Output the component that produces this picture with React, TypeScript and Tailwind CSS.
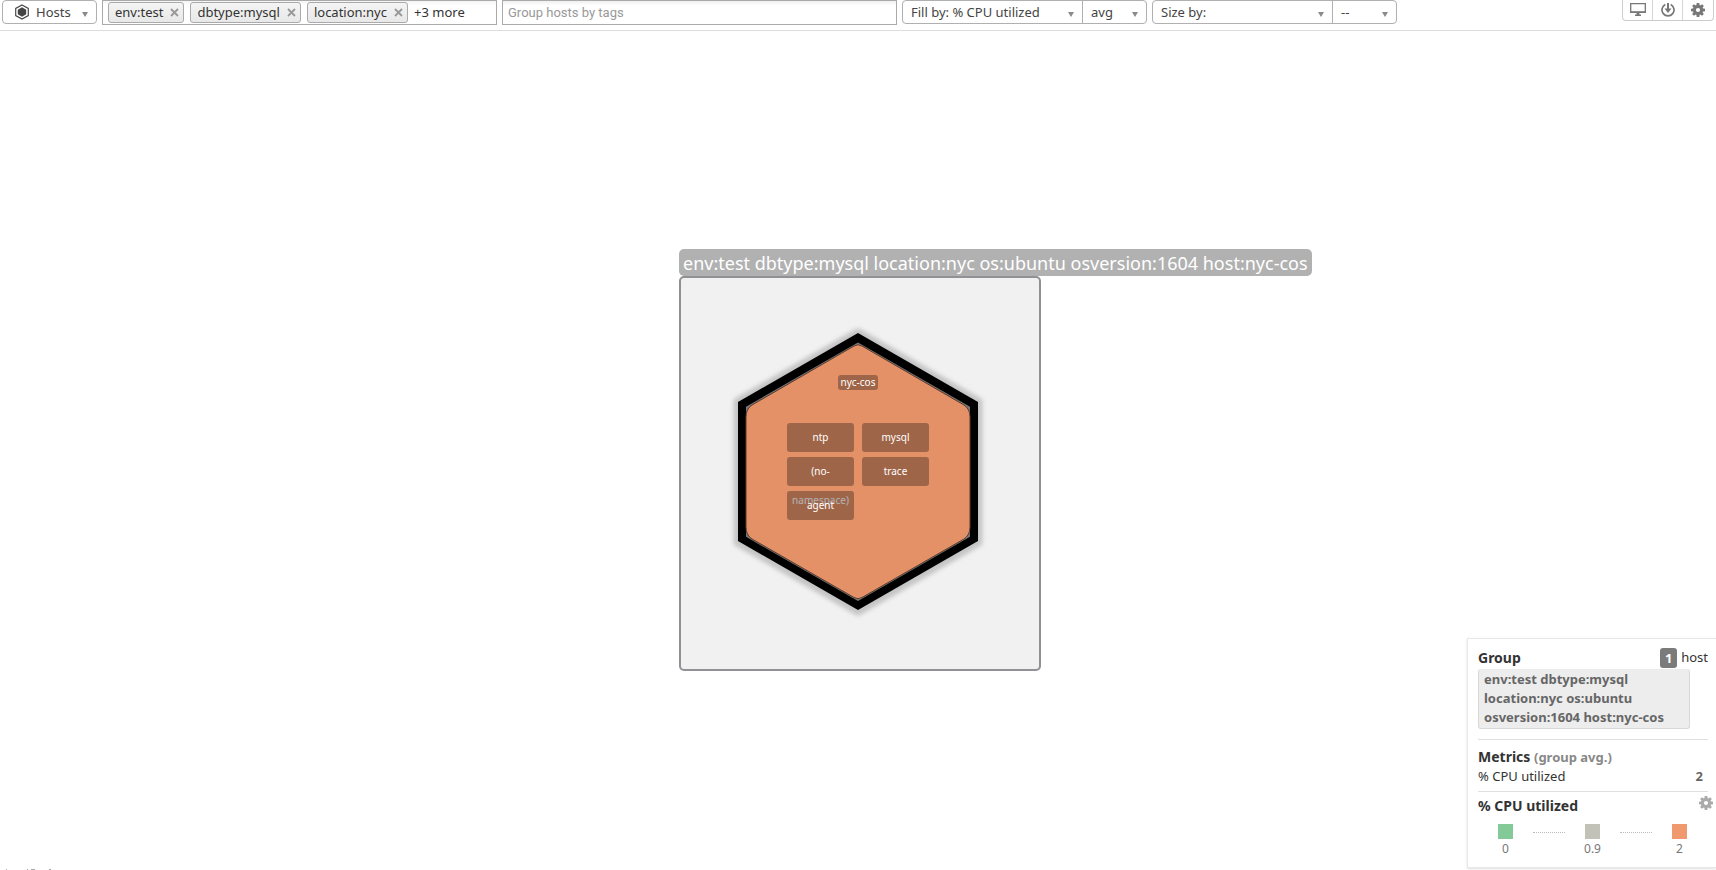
import { ReactNode } from "react";

function Caret() {
  return (
    <svg viewBox="0 0 6 5" className="pointer-events-none absolute right-2 top-[11px] h-[5px] w-[6px]" aria-hidden="true">
      <path d="M0 0h6L3 5z" fill="#8a8a8a" />
    </svg>
  );
}

function Picker({ label, options, className }: { label: string; options: string[]; className: string }) {
  return (
    <div className={`relative h-full ${className}`}>
      <select
        aria-label={label}
        className="block h-full w-full cursor-pointer appearance-none bg-transparent pl-2 pr-4 text-[13px] leading-[22px] text-[#444] outline-none"
      >
        {options.map((o) => (
          <option key={o}>{o}</option>
        ))}
      </select>
      <Caret />
    </div>
  );
}

function Gear({ color, className }: { color: string; className: string }) {
  return (
    <svg viewBox="0 0 14 14" className={className} aria-hidden="true">
      <g fill={color}>
        {[0, 45, 90, 135].map((a) => (
          <path key={a} d="M5.700 0h2.600l.4 3v8l-.4 3H5.700l-.4-3V3z" transform={`rotate(${a} 7 7)`} />
        ))}
        <circle cx="7" cy="7" r="5" />
      </g>
      <circle cx="7" cy="7" r="2.1" fill="#fff" />
    </svg>
  );
}

function Chip({ text }: { text: string }) {
  return (
    <span className="flex h-[21px] shrink-0 items-center gap-[7px] rounded-[3px] border border-[#aaa] bg-linear-to-b from-[#f4f4f4] to-[#e8e8e8] pl-[6px] pr-1 text-[13px] leading-[19px] text-[#333]">
      {text}
      <button type="button" aria-label={`Remove ${text}`} className="flex cursor-pointer">
        <svg viewBox="0 0 9 9" className="h-[9px] w-[9px]" aria-hidden="true">
          <path d="M1 1l7 7M8 1l-7 7" stroke="#999" strokeWidth="1.9" />
        </svg>
      </button>
    </span>
  );
}

function ToolButton({ label, children }: { label: string; children: ReactNode }) {
  return (
    <button type="button" aria-label={label} className="flex w-[30px] cursor-pointer items-start justify-center pt-[3px]">
      {children}
    </button>
  );
}

function Toolbar() {
  return (
    <header className="flex h-[31px] shrink-0 items-start gap-[5px] border-b border-[#ddd] pl-[2px] pr-[2px]">
      <div className="relative flex h-6 w-[95px] shrink-0 rounded-[4px] border border-[#b0b0b0]">
        <svg viewBox="0 0 16 16" className="pointer-events-none absolute left-[11px] top-[3px] h-4 w-4" aria-hidden="true">
          <path d="M8 .9l6.3 3.55v7.1L8 15.1l-6.3-3.55v-7.1z" fill="none" stroke="#4a4a4a" strokeWidth="1.2" />
          <path d="M8 3.3l4.2 2.35v4.7L8 12.7l-4.2-2.35v-4.7z" fill="#444" />
        </svg>
        <select
          aria-label="Resource type"
          className="w-full cursor-pointer appearance-none bg-transparent pl-[33px] text-[13px] leading-[22px] text-[#444] outline-none"
        >
          <option>Hosts</option>
        </select>
        <Caret />
      </div>

      <div className="flex h-[25px] w-[395px] items-center gap-[6px] overflow-hidden border border-[#aaa] bg-linear-to-b from-[#f4f4f4] to-white to-20% pl-[5px]">
        <Chip text="env:test" />
        <Chip text="dbtype:mysql" />
        <Chip text="location:nyc" />
        <span className="shrink-0 text-[13px] text-[#333]">+3 more</span>
      </div>

      <input
        type="text"
        aria-label="Group hosts by tags"
        placeholder="Group hosts by tags"
        className="h-[25px] w-[395px] border border-[#aaa] bg-linear-to-b from-[#f0f0f0] to-white to-20% px-[5px] font-[Roboto,sans-serif] text-[13px] outline-none placeholder:text-[#999]"
      />

      <div className="flex h-6 w-[245px] shrink-0 divide-x divide-[#b0b0b0] rounded-[4px] border border-[#b0b0b0]">
        <Picker label="Fill by" options={["Fill by: % CPU utilized"]} className="flex-1" />
        <Picker label="Fill aggregation" options={["avg"]} className="w-[63px]" />
      </div>
      <div className="flex h-6 w-[245px] shrink-0 divide-x divide-[#b0b0b0] rounded-[4px] border border-[#b0b0b0]">
        <Picker label="Size by" options={["Size by:"]} className="flex-1" />
        <Picker label="Size aggregation" options={["--"]} className="w-[63px]" />
      </div>

      <div className="ml-auto flex h-[21px] shrink-0 divide-x divide-[#d5d5d5] rounded-b-[4px] border border-t-0 border-[#ccc]">
        <ToolButton label="Full screen">
          <svg viewBox="0 0 16 13" className="h-[13px] w-4" aria-hidden="true">
            <path d="M.7.700h14.600v8.600H.7z" fill="none" stroke="#777" strokeWidth="1.300" />
            <path d="M.5 8.200h15v1.800H.5zM6.600 10h2.800v1.600h1.600V13H5v-1.400h1.600z" fill="#777" />
          </svg>
        </ToolButton>
        <ToolButton label="Download">
          <svg viewBox="0 0 14 14" className="h-[14px] w-[14px]" aria-hidden="true">
            <path d="M4.300 1.500a6 6 0 1 0 5.400 0" fill="none" stroke="#777" strokeWidth="1.700" />
            <path d="M6 0h2v5.600h2.500L7 10 3.500 5.600H6z" fill="#777" />
          </svg>
        </ToolButton>
        <ToolButton label="Settings">
          <Gear color="#777" className="h-[14px] w-[14px]" />
        </ToolButton>
      </div>
    </header>
  );
}

const apps = ["ntp", "mysql", "(no-namespace)", "trace", "agent"];

function HostMap() {
  return (
    <section className="mx-auto w-[358px] pt-[218px]">
      <h1 className="h-[27px] w-max rounded-[5px] bg-[#b1b1b1] px-1 text-[18px] leading-[29px] text-white">
        env:test dbtype:mysql location:nyc os:ubuntu osversion:1604 host:nyc-cos
      </h1>
      <div className="grid h-[395px] w-[362px] grid-cols-1 grid-rows-1 rounded-[5px] border-2 border-[#909095] bg-[#f1f1f1]">
        <svg viewBox="0 0 358 391" className="col-start-1 row-start-1 h-[391px] w-[358px]" aria-hidden="true">
          <defs>
            <filter id="glow" x="-10%" y="-10%" width="120%" height="120%">
              <feGaussianBlur stdDeviation="2" />
            </filter>
          </defs>
          <path d="M177 55l120 69v140l-120 69-120-69V124z" fill="#999" stroke="#999" strokeWidth="9" strokeLinejoin="round" opacity=".5" filter="url(#glow)" />
          <path d="M177 55l120 69v139l-120 69-120-69V124z" fill="#000" />
          <path d="M177 64.500l112 64.300v130l-112 64.300L65 258.800v-130z" fill="#777" />
          <path
            d="M173 68q4-2.500 8 0l102 59q6 4 6 12v110q0 8-6 12l-102 58.500q-4 2.500-8 0l-102-58.500q-6-4-6-12V139q0-8 6-12z"
            fill="#e49167"
            stroke="#5c3a29"
            strokeWidth="1"
          />
        </svg>
        <div className="col-start-1 row-start-1 flex w-[354px] flex-col items-center pt-[97px]">
          <div className="h-[15px] rounded-[3px] bg-black/30 px-[3px] text-[10px] leading-[15px] text-white">nyc-cos</div>
          <div className="mt-[33px] grid grid-cols-[67px_67px] gap-x-2 gap-y-[5px] text-center text-[10px] leading-[29px] text-white">
            {apps.map((app) => (
              <div key={app} className="isolate h-[29px] rounded-[3px] bg-black/30">
                {app}
              </div>
            ))}
          </div>
        </div>
      </div>
    </section>
  );
}

function LegendStop({ swatch, value }: { swatch: string; value: string }) {
  return (
    <div className="flex w-[15px] flex-col items-center">
      <div className={`h-[15px] w-[15px] shrink-0 ${swatch}`} />
      <span className="text-[12px] leading-[19px] text-[#777]">{value}</span>
    </div>
  );
}

function DetailPanel() {
  return (
    <aside className="absolute bottom-[2px] right-0 w-[249px] border border-r-0 border-[#e8e8e8] bg-white pl-[10px] pr-2 pt-[9px] text-[13px] text-[#333] shadow-sm">
      <div className="flex h-5 items-center justify-between">
        <h2 className="text-[14px] font-bold leading-5">Group</h2>
        <div className="flex items-center gap-1">
          <span className="h-5 w-[17px] rounded-[3px] bg-[#7b7b7b] text-center font-bold leading-5 text-white">1</span>
          <span>host</span>
        </div>
      </div>
      <p className="mt-px h-[60px] w-[212px] rounded-[3px] border border-t-0 border-[#d8d8d8] bg-[#ededed] px-[5px] pt-px font-bold leading-[19px] text-[#666]">
        env:test dbtype:mysql location:nyc os:ubuntu osversion:1604 host:nyc-cos
      </p>

      <div className="mt-[10px] border-t border-[#e0e0e0] pt-[7px]">
        <h2 className="text-[14px] font-bold leading-5">
          Metrics <span className="text-[13px] text-[#888]">(group avg.)</span>
        </h2>
        <dl className="flex justify-between pr-[5px] leading-[19px]">
          <dt>% CPU utilized</dt>
          <dd className="font-bold text-[#666]">2</dd>
        </dl>
      </div>

      <div className="mt-[5px] border-t border-[#e0e0e0] pt-1">
        <div className="flex h-5 items-start justify-between">
          <h2 className="text-[14px] font-bold leading-5">% CPU utilized</h2>
          <button type="button" aria-label="Legend settings" className="-mr-[5px] cursor-pointer">
            <Gear color="#aaa" className="h-[14px] w-[14px]" />
          </button>
        </div>
        <div className="mt-2 flex h-[43px] items-start gap-5 pl-5">
          <LegendStop swatch="bg-[#84c998]" value="0" />
          <div className="mt-2 w-8 border-t border-dotted border-[#bbb]" />
          <LegendStop swatch="bg-[#c2c2b9]" value="0.9" />
          <div className="mt-2 w-8 border-t border-dotted border-[#bbb]" />
          <LegendStop swatch="bg-[#f0986e]" value="2" />
        </div>
      </div>
    </aside>
  );
}

export default function App() {
  return (
    <div className="flex h-screen flex-col overflow-hidden bg-white font-['Noto_Sans',sans-serif]">
      <Toolbar />
      <main className="relative min-h-0 flex-1 overflow-hidden">
        <HostMap />
        <DetailPanel />
        <svg viewBox="0 0 60 1" className="absolute bottom-0 left-0 h-px w-[60px]" aria-hidden="true">
          <path d="M6 0h1v1H6zM27 0h1v1h-1zM31 0h4v1h-4zM49 0h2v1h-2z" fill="#aaa" />
        </svg>
      </main>
    </div>
  );
}
